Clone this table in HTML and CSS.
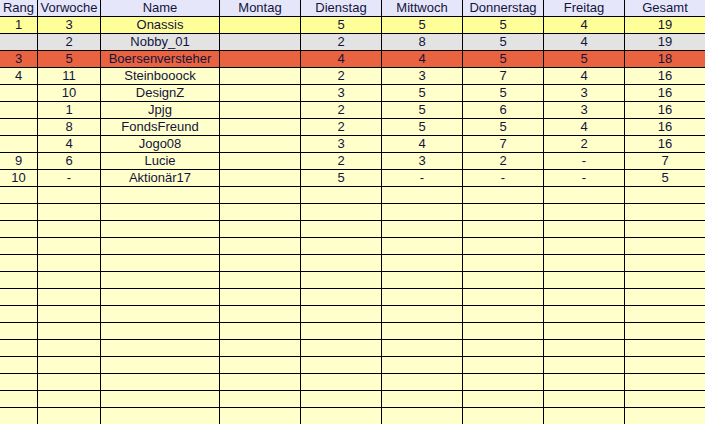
FILE: index.html
```html
<!DOCTYPE html>
<html lang="de">
<head>
<meta charset="utf-8">
<title>Wochenwertung</title>
<link rel="stylesheet" href="styles.css">
</head>
<body>
<div class="sheet">
  <div class="row head"><div>Rang</div><div>Vorwoche</div><div>Name</div><div>Montag</div><div>Dienstag</div><div>Mittwoch</div><div>Donnerstag</div><div>Freitag</div><div>Gesamt</div></div>
  <div class="row first"><div>1</div><div>3</div><div>Onassis</div><div></div><div>5</div><div>5</div><div>5</div><div>4</div><div>19</div></div>
  <div class="row grey"><div></div><div>2</div><div>Nobby_01</div><div></div><div>2</div><div>8</div><div>5</div><div>4</div><div>19</div></div>
  <div class="row mark"><div>3</div><div>5</div><div>Boersenversteher</div><div></div><div>4</div><div>4</div><div>5</div><div>5</div><div>18</div></div>
  <div class="row"><div>4</div><div>11</div><div>Steinbooock</div><div></div><div>2</div><div>3</div><div>7</div><div>4</div><div>16</div></div>
  <div class="row"><div></div><div>10</div><div>DesignZ</div><div></div><div>3</div><div>5</div><div>5</div><div>3</div><div>16</div></div>
  <div class="row"><div></div><div>1</div><div>Jpjg</div><div></div><div>2</div><div>5</div><div>6</div><div>3</div><div>16</div></div>
  <div class="row"><div></div><div>8</div><div>FondsFreund</div><div></div><div>2</div><div>5</div><div>5</div><div>4</div><div>16</div></div>
  <div class="row"><div></div><div>4</div><div>Jogo08</div><div></div><div>3</div><div>4</div><div>7</div><div>2</div><div>16</div></div>
  <div class="row"><div>9</div><div>6</div><div>Lucie</div><div></div><div>2</div><div>3</div><div>2</div><div>-</div><div>7</div></div>
  <div class="row"><div>10</div><div>-</div><div>Aktionär17</div><div></div><div>5</div><div>-</div><div>-</div><div>-</div><div>5</div></div>
  <div class="row"><div></div><div></div><div></div><div></div><div></div><div></div><div></div><div></div><div></div></div>
  <div class="row"><div></div><div></div><div></div><div></div><div></div><div></div><div></div><div></div><div></div></div>
  <div class="row"><div></div><div></div><div></div><div></div><div></div><div></div><div></div><div></div><div></div></div>
  <div class="row"><div></div><div></div><div></div><div></div><div></div><div></div><div></div><div></div><div></div></div>
  <div class="row"><div></div><div></div><div></div><div></div><div></div><div></div><div></div><div></div><div></div></div>
  <div class="row"><div></div><div></div><div></div><div></div><div></div><div></div><div></div><div></div><div></div></div>
  <div class="row"><div></div><div></div><div></div><div></div><div></div><div></div><div></div><div></div><div></div></div>
  <div class="row"><div></div><div></div><div></div><div></div><div></div><div></div><div></div><div></div><div></div></div>
  <div class="row"><div></div><div></div><div></div><div></div><div></div><div></div><div></div><div></div><div></div></div>
  <div class="row"><div></div><div></div><div></div><div></div><div></div><div></div><div></div><div></div><div></div></div>
  <div class="row"><div></div><div></div><div></div><div></div><div></div><div></div><div></div><div></div><div></div></div>
  <div class="row"><div></div><div></div><div></div><div></div><div></div><div></div><div></div><div></div><div></div></div>
  <div class="row"><div></div><div></div><div></div><div></div><div></div><div></div><div></div><div></div><div></div></div>
  <div class="row"><div></div><div></div><div></div><div></div><div></div><div></div><div></div><div></div><div></div></div>
</div>
</body>
</html>
```

FILE: styles.css
```css
html, body {
  margin: 0;
  padding: 0;
  overflow: hidden;
  background: #ffffcc;
}
.sheet {
  display: grid;
  grid-template-columns: 37px 62px 118px repeat(6, 80px);
  grid-auto-rows: 16px;
  gap: 1px;
  padding: 0 1px 1px 0;
  width: max-content;
  background: #000;
  font-family: "Liberation Sans", Arial, sans-serif;
  font-size: 13px;
  line-height: 16px;
  color: #14143a;
}
.row {
  display: contents;
}
.row > div {
  background: #ffffcc;
  text-align: center;
  white-space: nowrap;
  overflow: hidden;
}
.head > div {
  background: #e6e6fa;
}
.first > div {
  background: #ffff99;
}
.grey > div {
  background: #e3e3e3;
}
.mark > div {
  background: #ea6341;
}
```
